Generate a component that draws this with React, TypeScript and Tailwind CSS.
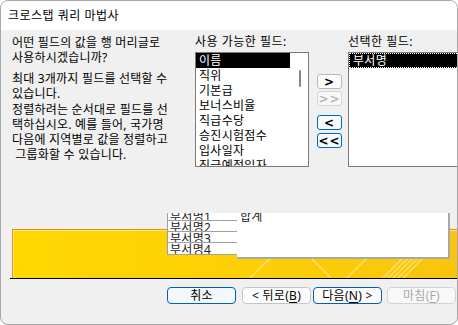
import React from "react";

const font = "font-['Noto_Sans','Noto_Sans_CJK_KR',sans-serif]";

function U({ children }: { children: React.ReactNode }) {
  return <span className="underline underline-offset-[2px]">{children}</span>;
}

function ArrowBtn({ label, variant }: { label: string; variant: "normal" | "disabled" | "blue" }) {
  const cls =
    variant === "blue"
      ? "border-[#0067c0] bg-[#f6f9fd] text-black"
      : variant === "disabled"
      ? "border-[#d6d6d6] bg-[#f8f8f8] text-[#b8b8b8]"
      : "border-[#b8b8b8] bg-[#fdfdfd] text-black";
  return (
    <div
      className={`w-[25px] h-[15px] rounded-[3px] border flex items-center justify-center text-[12px] leading-none font-['DejaVu_Sans',sans-serif] font-bold tracking-[1px] ${cls}`}
    >
      {label}
    </div>
  );
}

export default function App() {
  const avail = ["이름", "직위", "기본급", "보너스비율", "직급수당", "승진시험점수", "입사일자", "직급예정일자"];
  return (
    <div
      className={`w-[458px] h-[325px] rounded-[8px] border border-[#a8a8a8] bg-[#f0f0f0] overflow-hidden flex flex-col text-[12px] text-black ${font}`}
    >
      {/* title bar */}
      <div className="h-[29px] shrink-0 bg-white flex items-center pl-[7px] text-[12px] tracking-[0.5px]">
        크로스탭 쿼리 마법사
      </div>

      {/* top content */}
      <div className="h-[183px] shrink-0 flex">
        <div className="w-[194px] shrink-0 pl-[11px] pt-[5px] leading-[15px] tracking-[0.2px]">
          <p>
            어떤 필드의 값을 행 머리글로
            <br />
            사용하시겠습니까?
          </p>
          <p className="mt-[6px]">
            최대 3개까지 필드를 선택할 수
            <br />
            있습니다.
          </p>
          <p className="mt-[1px]">
            정렬하려는 순서대로 필드를 선
            <br />
            택하십시오. 예를 들어, 국가명
            <br />
            다음에 지역별로 값을 정렬하고
            <br />
            &nbsp;그룹화할 수 있습니다.
          </p>
        </div>

        <div className="w-[114px] shrink-0 pt-[4px]">
          <div className="h-[15px] leading-[15px] tracking-[0.5px] whitespace-nowrap">사용 가능한 필드:</div>
          <div className="mt-[3px] h-[115px] border border-[#7a7a7a] bg-white flex overflow-hidden">
            <div className="w-[94px] shrink-0">
              {avail.map((a, i) => (
                <div
                  key={a}
                  className={`h-[15px] leading-[15px] pl-[3px] whitespace-nowrap tracking-[0.3px] ${
                    i === 0 ? "bg-black text-white" : ""
                  }`}
                >
                  {a}
                </div>
              ))}
            </div>
            <div className="flex-1 relative">
              <div className="absolute left-[9px] top-[17px] w-[2px] h-[17px] rounded-full bg-[#858585]" />
            </div>
          </div>
        </div>

        <div className="w-[25px] shrink-0 ml-[8px] pt-[44px] flex flex-col">
          <ArrowBtn label=">" variant="normal" />
          <div className="mt-[2px]">
            <ArrowBtn label=">>" variant="disabled" />
          </div>
          <div className="mt-[9px]">
            <ArrowBtn label="<" variant="blue" />
          </div>
          <div className="mt-[3px]">
            <ArrowBtn label="<<" variant="blue" />
          </div>
        </div>

        <div className="flex-1 ml-[6px] pt-[4px] min-w-0">
          <div className="h-[15px] leading-[15px] tracking-[0.5px] whitespace-nowrap">선택한 필드:</div>
          <div className="mt-[3px] h-[115px] w-[130px] border border-[#7a7a7a] bg-white">
            <div className="h-[15px] leading-[13px] pl-[3px] bg-black text-white border border-dotted border-white tracking-[0.3px]">
              부서명
            </div>
          </div>
        </div>
      </div>

      {/* sample area */}
      <div className="ml-[9px] h-[66px] shrink-0 relative border-b border-black overflow-hidden">
        <div className="absolute left-[2px] top-[16px] right-0 bottom-0 border-l border-t border-[#f08c10] bg-gradient-to-r from-[#ffd800] via-[#fdd006] to-[#f9c40e]">
          <div className="absolute inset-0 border-l border-t border-[#ffe98a]" />
          <svg className="absolute left-0 top-0" width="460" height="50">
            <g stroke="#fff3b0" strokeOpacity="0.55" strokeWidth="1.5">
              <line x1="276" y1="10" x2="236" y2="49" />
              <line x1="280" y1="10" x2="319" y2="49" />
              <line x1="372" y1="10" x2="333" y2="49" />
              <line x1="408" y1="10" x2="369" y2="49" />
              <line x1="413" y1="10" x2="374" y2="49" />
              <line x1="418" y1="10" x2="379" y2="49" />
              <line x1="423" y1="10" x2="384" y2="49" />
              <line x1="428" y1="10" x2="389" y2="49" />
            </g>
          </svg>
        </div>

        {/* row header column */}
        <div className="absolute left-[157px] top-[-3px] w-[70px] bg-white border-l border-[#a0a0a0]">
          {["부서명1", "부서명2", "부서명3", "부서명4"].map((t, i) => (
            <div
              key={t}
              className={`${i === 3 ? "h-[12px]" : "h-[11px]"} border-b border-[#a0a0a0] overflow-hidden pl-[2px] leading-[14px] tracking-[0.3px] text-[#222]`}
            >
              {t}
            </div>
          ))}
        </div>

        {/* value box */}
        <div className="absolute left-[227px] top-0 w-[213px] h-[46px] bg-white border-r-2 border-b-2 border-[#a8a8a8] pl-[3px] leading-[10px] overflow-hidden">
          <div className="-mt-[1px] tracking-[0.3px] text-[#222]">합계</div>
        </div>
      </div>

      {/* buttons */}
      <div className="mt-[8px] pl-[166px] flex">
        <div className="w-[69px] h-[17px] rounded-[4px] border border-[#005fb8] bg-[#f4f8fc] flex items-center justify-center leading-none tracking-[0.3px]">
          취소
        </div>
        <div className="ml-[6px] w-[69px] h-[17px] rounded-[4px] border border-[#c4c4c4] bg-[#fdfdfd] flex items-center justify-center leading-none tracking-[0.3px]">
          &lt; 뒤로(<U>B</U>)
        </div>
        <div className="ml-[2px] w-[69px] h-[17px] rounded-[4px] border border-[#005fb8] bg-[#fdfdfd] flex items-center justify-center leading-none tracking-[0.3px]">
          다음(<U>N</U>) &gt;
        </div>
        <div className="ml-[5px] w-[69px] h-[17px] rounded-[4px] border border-[#d4d4d4] bg-[#f8f8f8] text-[#a8a8a8] flex items-center justify-center leading-none tracking-[0.3px]">
          마침(<U>F</U>)
        </div>
      </div>
    </div>
  );
}
